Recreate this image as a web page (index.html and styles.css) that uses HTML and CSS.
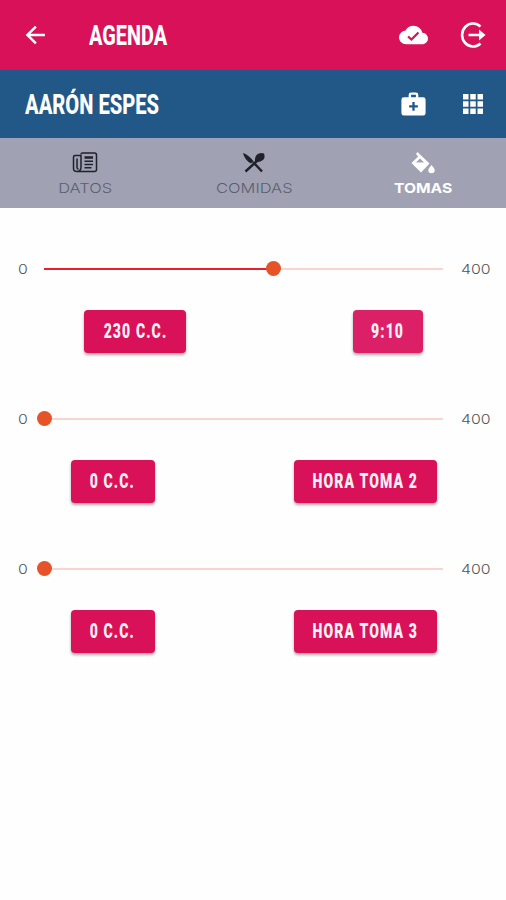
FILE: index.html
```html
<!DOCTYPE html>
<html lang="es">
  <head>
    <meta charset="UTF-8">
    <meta name="viewport" content="width=device-width, initial-scale=1">
    <title>Agenda</title>
    <link rel="stylesheet" href="styles.css">
  </head>
  <body>
    <header class="bar bar-main">
      <svg class="icon" width="28" height="28" viewBox="0 0 24 24"><path d="M20.500 10.900H8l5.500-5.400L12 4l-8 8 8 8 1.500-1.500L8 13.100h12.500z"/></svg>
      <h1 class="title title-agenda"><span>AGENDA</span></h1>
      <div class="actions">
        <svg class="icon" width="29" height="28" viewBox="0 0 24 24" preserveAspectRatio="none"><path d="M19.350 10.040A7.490 7.490 0 0 0 12 4C9.110 4 6.600 5.640 5.350 8.040A5.994 5.994 0 0 0 0 14c0 3.310 2.690 6 6 6h13c2.760 0 5-2.240 5-5 0-2.640-2.050-4.780-4.650-4.960z"/><path class="check" d="M7.500 13.200l2.800 2.700 5.800-6"/></svg>
        <svg class="icon" width="28" height="28" viewBox="0 0 28 28"><path class="line" d="M21.500 5.500A11 11.500 0 1 0 21.500 22.500M9.500 14H22"/><path d="M20 8.500l6.500 5.500-6.500 5.500z"/></svg>
      </div>
    </header>

    <div class="bar bar-child">
      <h2 class="title title-child"><span>AARÓN ESPES</span></h2>
      <div class="actions">
        <svg class="icon" width="29" height="28" viewBox="0 0 30 28"><path fill-rule="evenodd" d="M10 7V4.500Q10 2 12.500 2h5Q20 2 20 4.500V7h5q2.500 0 2.500 2.500v14q0 2.500-2.500 2.500H5q-2.500 0-2.500-2.500v-14Q2.500 7 5 7zM12.500 7h5V4.500h-5zM13.800 12v3.300h-3.300v2.400h3.300V21h2.400v-3.300h3.300v-2.400h-3.300V12z"/></svg>
        <svg class="icon" width="28" height="28" viewBox="0 0 28 28"><path d="M4 4h5.500v5.500H4zM11.250 4h5.500v5.500h-5.500zM18.500 4H24v5.500h-5.500zM4 11.250h5.500v5.500H4zM11.250 11.250h5.500v5.500h-5.500zM18.500 11.250H24v5.500h-5.500zM4 18.500h5.500V24H4zM11.250 18.500h5.500V24h-5.500zM18.500 18.500H24V24h-5.500z"/></svg>
      </div>
    </div>

    <nav class="tabs">
      <div class="tab">
        <svg width="26" height="24" viewBox="0 0 26 24"><path class="line" d="M9 3.500Q9 2 10.500 2h12Q24.500 2 24.500 4v14.500q0 2-2 2H5q-3.500 0-3.500-3V6q0-1.500 1.500-1.500h6M9 4v12.500q0 3.500-4 4M5 7.500v9q0 1.500 1.500 1.500"/><path class="line thick" d="M12.500 6.500h8.500"/><path class="line" d="M12.500 10.300h8.500M12.500 13.500h8.500M12.500 16.800h7"/></svg>
        <div class="label label-datos">DATOS</div>
      </div>
      <div class="tab">
        <svg width="26" height="24" viewBox="0 0 26 24"><path class="line thick" d="M4.500 20.500L17 9M12 11l9 9.500"/><path d="M2 2q5 1.500 10.500 8l-2.500 2.500Q3.500 9 2 2z"/><path d="M14 10.500q-.5-4.500 2-7 3-2.500 7-1 1.500 4-1 6.500-3 2.500-6.500 2z"/></svg>
        <div class="label label-comidas">COMIDAS</div>
      </div>
      <div class="tab active">
        <svg width="26" height="24" viewBox="0 0 26 24"><path fill-rule="evenodd" d="M7.500 1l12 11.500-8.500 9L1.500 12l6.700-6.500L6 3zM10 7.500l-4 4h8z"/><path d="M21.500 14q3.200 3.500 3.200 5a3.200 3.200 0 0 1-6.400 0q0-1.500 3.200-5z"/></svg>
        <div class="label label-tomas">TOMAS</div>
      </div>
    </nav>

    <main>
      <section class="toma">
        <div class="range">
          <div class="num">0</div>
          <div class="track"><div class="fill" style="width: 57.5%"></div><div class="knob" style="left: 57.5%"></div></div>
          <div class="num max">400</div>
        </div>
        <div class="buttons">
          <div class="button amount"><span>230 C.C.</span></div>
          <div class="button time"><span>9:10</span></div>
        </div>
      </section>
      <section class="toma">
        <div class="range">
          <div class="num">0</div>
          <div class="track"><div class="knob" style="left: 0%"></div></div>
          <div class="num max">400</div>
        </div>
        <div class="buttons">
          <div class="button zero"><span>0 C.C.</span></div>
          <div class="button hour"><span>HORA TOMA 2</span></div>
        </div>
      </section>
      <section class="toma">
        <div class="range">
          <div class="num">0</div>
          <div class="track"><div class="knob" style="left: 0%"></div></div>
          <div class="num max">400</div>
        </div>
        <div class="buttons">
          <div class="button zero"><span>0 C.C.</span></div>
          <div class="button hour"><span>HORA TOMA 3</span></div>
        </div>
      </section>
    </main>
  </body>
</html>
```
FILE: styles.css
```css
body {
  margin: 0;
  background-color: #fdfefd;
  font-family: Inter, sans-serif;
  color: #777;
}

.bar {
  display: flex;
  align-items: center;
  box-sizing: border-box;
  padding: 0 19px 0 21px;
  color: white;
}

.bar-main {
  height: 70px;
  background-color: #d81159;
}

.bar-child {
  height: 68px;
  padding-left: 25px;
  background-color: #225887;
}

.icon {
  display: block;
  fill: white;
}

.line, .check {
  fill: none;
  stroke: white;
  stroke-width: 2.6;
}

.check {
  stroke: #d81159;
  stroke-width: 1.8;
}

.title {
  margin: 0;
  padding-top: 2px;
  font-family: Roboto, sans-serif;
  font-size: 28px;
  font-weight: 800;
  line-height: 34px;
  white-space: nowrap;
}

.title span {
  display: inline-block;
  transform-origin: left;
}

.title-agenda {
  margin-left: 40px;
}

.title-agenda span {
  transform: scaleX(0.71);
}

.title-child span {
  transform: scaleX(0.72);
}

.actions {
  display: flex;
  gap: 31px;
  margin-left: auto;
}

.tabs {
  display: grid;
  grid-template-columns: repeat(3, 1fr);
  height: 70px;
  background-color: #a0a2b3;
}

.tab {
  display: flex;
  flex-direction: column;
  align-items: center;
  padding: 13px 0 0 2px;
  color: #5c5e6c;
  fill: #20212b;
}

.tab svg {
  display: block;
}

.tab .line {
  stroke: #20212b;
  stroke-width: 1.5;
}

.tab .thick {
  stroke-width: 2.5;
}

.tab.active {
  color: white;
  fill: white;
}

.label {
  font-size: 13.5px;
  font-weight: 300;
  line-height: 20px;
  margin-top: 3px;
  white-space: nowrap;
}

.label-datos, .label-comidas {
  transform: scaleX(1.22);
}

.label-tomas {
  font-weight: 700;
  transform: scaleX(1.16);
}

main {
  padding-top: 50px;
}

.toma {
  height: 150px;
}

.range {
  display: flex;
  align-items: center;
  height: 21px;
  padding: 0 15px 0 18px;
}

.num {
  width: 10px;
  padding-top: 1px;
  font-size: 13px;
  font-weight: 300;
  color: #555;
  line-height: 21px;
  transform: scaleX(1.22);
  transform-origin: left;
}

.max {
  width: 30px;
}

.track {
  position: relative;
  flex-grow: 1;
  height: 2px;
  margin: 0 18px 0 16px;
  background-color: #f9d5cd;
}

.fill {
  height: 2px;
  background-color: #e2232b;
}

.knob {
  position: absolute;
  top: -6.5px;
  width: 15px;
  height: 15px;
  margin-left: -7.5px;
  border-radius: 50%;
  background-color: #e65328;
}

.buttons {
  display: flex;
  justify-content: space-around;
  margin-top: 31px;
  padding-left: 1px;
}

.button {
  display: flex;
  align-items: center;
  justify-content: center;
  height: 43px;
  border-radius: 4px;
  background-color: #d81159;
  box-shadow: 0 2px 3px rgba(0, 0, 0, 0.35);
  color: #fff0f5;
  font-family: Roboto, sans-serif;
  font-size: 20px;
  font-weight: 900;
  letter-spacing: 1.6px;
  white-space: nowrap;
}

.button span {
  flex-shrink: 0;
  padding-bottom: 2px;
  transform: scaleX(0.7);
}

.amount {
  width: 102px;
}

.time {
  width: 70px;
  background-color: #dc2067;
}

.zero {
  width: 84px;
}

.hour {
  width: 143px;
}
```
